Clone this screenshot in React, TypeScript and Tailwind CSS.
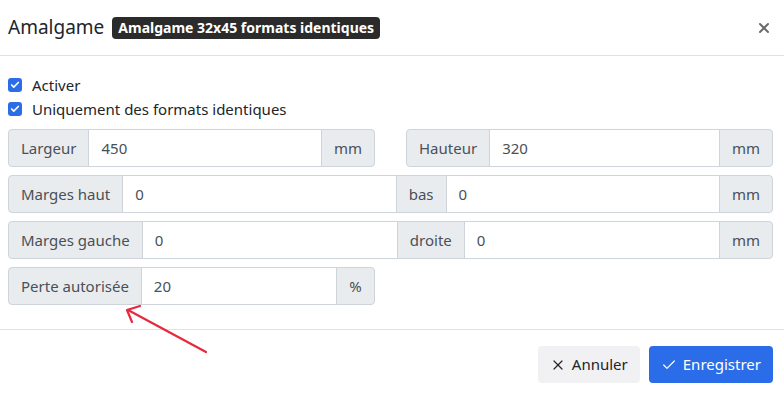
import { Check, X } from 'lucide-react';

type Part = { kind: 'addon' | 'input'; text: string; cls: string };

function Group({ parts, className }: { parts: Part[]; className: string }) {
  return (
    <div className={`flex h-[38px] ${className}`}>
      {parts.map((p, i) => {
        const first = i === 0;
        const last = i === parts.length - 1;
        const round = `${first ? 'rounded-l-[4px]' : ''} ${last ? 'rounded-r-[4px]' : ''} ${first ? '' : '-ml-px'}`;
        return p.kind === 'addon' ? (
          <div
            key={i}
            className={`flex items-center justify-center border border-[#ced4da] bg-[#e9ecef] px-3 text-[15px] text-[#495057] ${round} ${p.cls}`}
          >
            {p.text}
          </div>
        ) : (
          <div
            key={i}
            className={`flex min-w-0 items-center border border-[#ced4da] bg-white px-3 text-[15px] text-[#495057] ${round} ${p.cls}`}
          >
            {p.text}
          </div>
        );
      })}
    </div>
  );
}

const a = (text: string, cls = 'shrink-0'): Part => ({ kind: 'addon', text, cls });
const inp = (text: string, cls = 'flex-1'): Part => ({ kind: 'input', text, cls });

function Box({ label }: { label: string }) {
  return (
    <label className="flex h-[20px] items-center gap-[10px]">
      <span className="flex h-[14px] w-[14px] items-center justify-center rounded-[3px] bg-[#2b6de8]">
        <Check size={10} strokeWidth={4} className="text-white" />
      </span>
      <span className="text-[15px] leading-[20px] text-[#212529]">{label}</span>
    </label>
  );
}

export default function App() {
  return (
    <div className="h-[395px] w-[784px] bg-white font-['Noto_Sans',sans-serif]">
      <div className="flex h-[56px] items-center border-b border-[#dee2e6] px-2">
        <h2 className="text-[19px] leading-none text-[#212529]">Amalgame</h2>
        <span className="ml-2 rounded-[4px] bg-[#2b2b2b] px-[6px] py-[4px] text-[14px] font-bold leading-none text-white">
          Amalgame 32x45 formats identiques
        </span>
        <X size={16} strokeWidth={3} className="ml-auto mr-[4px] text-[#6c6c6c]" />
      </div>

      <div className="relative flex w-[781px] flex-col px-2 pb-6 pt-[19px]">
        <div className="flex flex-col gap-1">
          <Box label="Activer" />
          <Box label="Uniquement des formats identiques" />
        </div>

        <div className="mt-[10px] flex flex-col gap-2">
          <div className="flex gap-[31px]">
            <Group className="w-[367px]" parts={[a('Largeur'), inp('450'), a('mm')]} />
            <Group className="w-[367px]" parts={[a('Hauteur'), inp('320'), a('mm')]} />
          </div>
          <Group parts={[a('Marges haut'), inp('0'), a('bas'), inp('0'), a('mm')]} className="w-[765px]" />
          <Group parts={[a('Marges gauche'), inp('0'), a('droite'), inp('0'), a('mm')]} className="w-[765px]" />
          <Group className="w-[367px]" parts={[a('Perte autorisée'), inp('20'), a('%', 'shrink-0 w-[39px]')]} />
        </div>

        <svg className="absolute left-[120px] top-[245px]" width="100" height="56" viewBox="0 0 100 56">
          <path d="M86 51 L8 9" stroke="#e8283c" strokeWidth="2.2" strokeLinecap="round" fill="none" />
          <path d="M20 5 L7 9 L12 21" stroke="#e8283c" strokeWidth="2.2" strokeLinecap="round" strokeLinejoin="round" fill="none" />
        </svg>
      </div>

      <div className="flex justify-end gap-[9px] border-t border-[#dee2e6] px-2 pr-[11px] pt-4">
        <button className="flex h-[37px] items-center gap-[6px] rounded-[4px] bg-[#f1f1f3] px-3 text-[15px] text-[#212529]">
          <X size={16} strokeWidth={1.8} />
          Annuler
        </button>
        <button className="flex h-[37px] items-center gap-[6px] rounded-[4px] bg-[#2b6de8] px-3 text-[15px] text-white">
          <Check size={16} strokeWidth={1.8} />
          Enregistrer
        </button>
      </div>
    </div>
  );
}
